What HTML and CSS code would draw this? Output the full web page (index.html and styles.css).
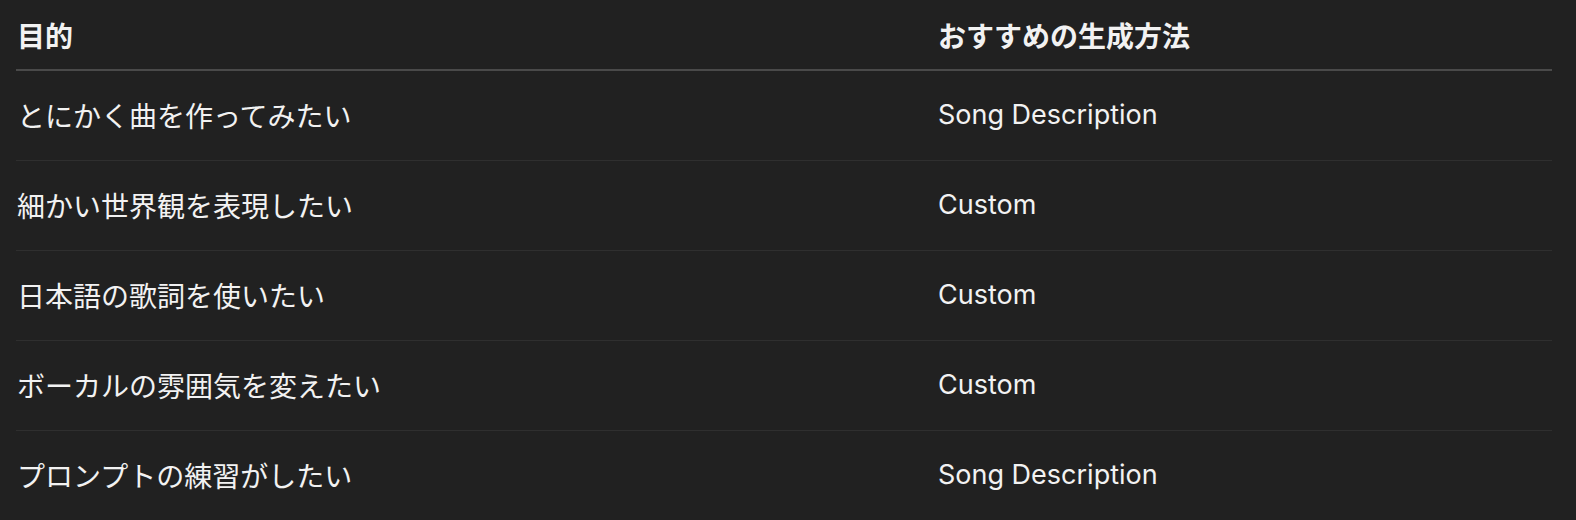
FILE: index.html
```html
<!DOCTYPE html>
<html lang="ja">
<head>
<meta charset="utf-8">
<link rel="stylesheet" href="styles.css">
</head>
<body>
<table class="tbl">
  <thead>
    <tr><th class="c1">目的</th><th class="c2">おすすめの生成方法</th></tr>
  </thead>
  <tbody>
    <tr><td class="c1">とにかく曲を作ってみたい</td><td class="c2">Song Description</td></tr>
    <tr><td class="c1">細かい世界観を表現したい</td><td class="c2">Custom</td></tr>
    <tr><td class="c1">日本語の歌詞を使いたい</td><td class="c2">Custom</td></tr>
    <tr><td class="c1">ボーカルの雰囲気を変えたい</td><td class="c2">Custom</td></tr>
    <tr><td class="c1">プロンプトの練習がしたい</td><td class="c2">Song Description</td></tr>
  </tbody>
</table>
</body>
</html>
```
FILE: styles.css
```css
html, body { margin: 0; padding: 0; }
body {
  background: #212121;
  color: #f2f2f2;
  font-family: Inter, "Noto Sans CJK JP", sans-serif;
  padding: 0 24px 0 16px;
  height: 520px;
  overflow: hidden;
}
.tbl {
  width: 1536px;
  border-collapse: collapse;
  font-size: 28px;
}
.tbl th {
  text-align: left;
  font-weight: 700;
  height: 69px;
  padding: 0 0 0 1px;
  border-bottom: 2px solid #4a4a4a;
  vertical-align: middle;
}
.tbl th.c1 { width: 920px; }
.tbl td {
  height: 87px;
  padding: 0 0 2px 1px;
  border-bottom: 1px solid #2f2f2f;
  vertical-align: middle;
}
.tbl td.c2 { font-size: 27px; }
```
